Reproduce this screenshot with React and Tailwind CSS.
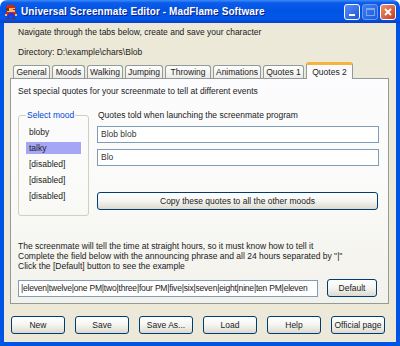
import React from 'react';

const tabs = [
    { label: 'General', w: 'w-[37px]' },
    { label: 'Moods', w: 'w-[33px]' },
    { label: 'Walking', w: 'w-[36px]' },
    { label: 'Jumping', w: 'w-[38px]' },
    { label: 'Throwing', w: 'w-[46px]' },
    { label: 'Animations', w: 'w-[48px]' },
    { label: 'Quotes 1', w: 'w-[41px]' },
];

const moods = ['bloby', 'talky', '[disabled]', '[disabled]', '[disabled]'];

function XpButton({ children, className = '' }) {
    return (
        <button className={`h-[18px] rounded-[3px] border border-[#003C74] bg-gradient-to-b from-[#FFFFFF] via-[#F4F4F0] to-[#DCDAD0] text-[8.5px] text-[#222] leading-none ${className}`}>
            {children}
        </button>
    );
}

function MarioIcon() {
    // tiny sprite in the title bar
    return (
        <svg width="14" height="14" viewBox="0 0 14 14" shapeRendering="crispEdges">
            <rect x="3" y="0" width="7" height="2" fill="#D82800" />
            <rect x="2" y="2" width="10" height="1" fill="#D82800" />
            <rect x="2" y="3" width="3" height="3" fill="#6B3A00" />
            <rect x="5" y="3" width="6" height="3" fill="#FFB070" />
            <rect x="9" y="4" width="3" height="1" fill="#6B3A00" />
            <rect x="3" y="6" width="8" height="1" fill="#FFB070" />
            <rect x="2" y="7" width="10" height="3" fill="#D82800" />
            <rect x="4" y="8" width="6" height="3" fill="#2038EC" />
            <rect x="1" y="9" width="2" height="2" fill="#FFB070" />
            <rect x="11" y="9" width="2" height="2" fill="#FFB070" />
            <rect x="3" y="11" width="3" height="2" fill="#2038EC" />
            <rect x="8" y="11" width="3" height="2" fill="#2038EC" />
            <rect x="2" y="13" width="4" height="1" fill="#6B3A00" />
            <rect x="8" y="13" width="4" height="1" fill="#6B3A00" />
        </svg>
    );
}

export default function App() {
    return (
        <div className="w-[400px] h-[346px] flex flex-col bg-white font-['Liberation_Sans',Arial,sans-serif]">
            {/* title bar */}
            <div className="h-[23px] rounded-t-[7px] flex items-center pl-[4px] pr-[4px] bg-[linear-gradient(to_bottom,#3C8CF8_0%,#0C5CEC_12%,#0054E3_45%,#0058EB_80%,#0A3FC8_100%)]">
                <MarioIcon />
                <span className="ml-[3px] text-white font-bold text-[10px] tracking-[0.1px] [text-shadow:1px_1px_0_#0A1E8A]">
                    Universal Screenmate Editor - MadFlame Software
                </span>
                <div className="ml-auto flex gap-[2px]">
                    <div className="w-[16px] h-[16px] rounded-[3px] border border-white bg-gradient-to-br from-[#5A8EF8] to-[#1F54D8] flex items-end justify-start pl-[4px] pb-[3px]">
                        <div className="w-[6px] h-[2px] bg-white" />
                    </div>
                    <div className="w-[16px] h-[16px] rounded-[3px] border border-[#9BB6F0] bg-gradient-to-br from-[#5A8EF8] to-[#2A5FDC] flex items-center justify-center opacity-70">
                        <div className="w-[9px] h-[8px] border border-[#B5C8F2] border-t-2" />
                    </div>
                    <div className="w-[16px] h-[16px] rounded-[3px] border border-white bg-gradient-to-br from-[#F0906A] to-[#C8381A] flex items-center justify-center">
                        <svg width="8" height="8" viewBox="0 0 8 8">
                            <path d="M1 1 L7 7 M7 1 L1 7" stroke="white" strokeWidth="1.8" />
                        </svg>
                    </div>
                </div>
            </div>

            {/* window body */}
            <div className="flex-1 flex flex-col bg-[#0054E3] px-[4px] pb-[4px]">
                <div className="flex-1 flex flex-col bg-[#ECE9D8] text-[8.5px] text-[#1a1a1a]">
                    <div className="pl-[14px] pt-[4px] leading-[11px]">Navigate through the tabs below, create and save your character</div>
                    <div className="pl-[14px] pt-[9px] leading-[11px]">Directory: D:\example\chars\Blob</div>

                    {/* tab strip */}
                    <div className="mt-[4px] ml-[9px] flex items-end gap-[2px] h-[16px]">
                        {tabs.map(t => (
                            <div key={t.label} className={`${t.w} h-[13px] rounded-t-[3px] border border-b-0 border-[#919B9C] bg-gradient-to-b from-white to-[#ECEBE6] flex items-center justify-center leading-none text-[#222]`}>
                                {t.label}
                            </div>
                        ))}
                        <div className="relative z-10 -mb-[1px] w-[47px] h-[17px] rounded-t-[3px] border border-b-0 border-[#919B9C] border-t-[3px] border-t-[#F6B43E] bg-[#FCFCFE] flex items-center justify-center leading-none text-[#222]">
                            Quotes 2
                        </div>
                    </div>

                    {/* tab panel */}
                    <div className="ml-[6px] mr-[7px] h-[226px] border border-[#919B9C] bg-gradient-to-b from-[#FCFCFE] via-[#FAFAF8] to-[#F2F1EA] flex flex-col px-[7px]">
                        <div className="pt-[7px] leading-[11px]">Set special quotes for your screenmate to tell at different events</div>

                        <div className="mt-[18px] flex gap-[8px]">
                            <fieldset className="w-[71px] h-[106px] -mt-[5px] border border-[#D0D0BF] rounded-[3px] px-[7px] pb-0">
                                <legend className="px-[1px] text-[#0046D5] leading-[11px]">Select mood</legend>
                                <div className="flex flex-col gap-[4px] mt-[5px]">
                                    {moods.map((m, i) => (
                                        <div key={i} className={`h-[12px] leading-[12px] pl-[3px] ${i === 1 ? 'bg-[#A6A6F6]' : ''}`}>{m}</div>
                                    ))}
                                </div>
                            </fieldset>

                            <div className="w-[282px] flex flex-col">
                                <div className="leading-[11px] -mt-[5px] pl-[1px]">Quotes told when launching the screenmate program</div>
                                <div className="mt-[5px] h-[17px] border border-[#7F9DB9] bg-white flex items-center pl-[3px] text-[#333]">Blob blob</div>
                                <div className="mt-[6px] h-[17px] border border-[#7F9DB9] bg-white flex items-center pl-[3px] text-[#333]">Blo</div>
                                <XpButton className="mt-[26px] w-[281px]">Copy these quotes to all the other moods</XpButton>
                            </div>
                        </div>

                        <div className="mt-[25px] leading-[10px]">
                            <div>The screenmate will tell the time at straight hours, so it must know how to tell it</div>
                            <div>Complete the field below with the announcing phrase and all 24 hours separated by "|"</div>
                            <div>Click the [Default] button to see the example</div>
                        </div>

                        <div className="mt-[8px] flex items-center">
                            <div className="w-[300px] h-[17px] border border-[#7F9DB9] bg-white flex items-center px-[2px] overflow-hidden whitespace-nowrap text-[#222] tracking-[-0.2px]">
                                |eleven|twelve|one PM|two|three|four PM|five|six|seven|eight|nine|ten PM|eleven
                            </div>
                            <XpButton className="ml-[9px] w-[50px]">Default</XpButton>
                        </div>
                    </div>

                    {/* bottom buttons */}
                    <div className="mt-[12px] ml-[7px] flex gap-[10px]">
                        <XpButton className="w-[54px]">New</XpButton>
                        <XpButton className="w-[54px]">Save</XpButton>
                        <XpButton className="w-[54px]">Save As...</XpButton>
                        <XpButton className="w-[54px]">Load</XpButton>
                        <XpButton className="w-[54px]">Help</XpButton>
                        <XpButton className="w-[54px]">Official page</XpButton>
                    </div>
                </div>
            </div>
        </div>
    );
}
